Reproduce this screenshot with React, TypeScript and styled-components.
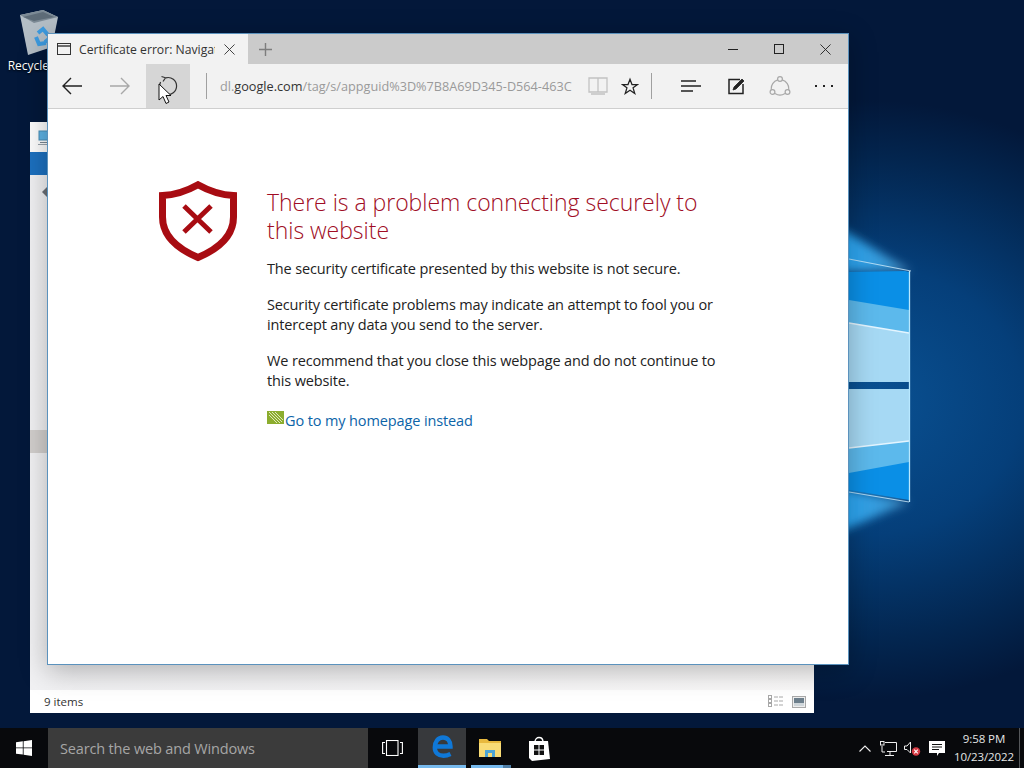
import styled, { createGlobalStyle } from "styled-components";

const Reset = createGlobalStyle`
  html, body { margin: 0; padding: 0; overflow: hidden; background: #000; }
  * { box-sizing: border-box; }
`;

const Screen = styled.div`
  width: 1024px;
  height: 768px;
  display: flex;
  flex-direction: column;
  font-family: "Open Sans", "Noto Sans", sans-serif;
  overflow: hidden;
`;
const Desktop = styled.div`
  position: relative;
  flex: 1;
  overflow: hidden;
  background: #03183a;
`;
const Wallpaper = styled.svg`
  position: absolute;
  inset: 0;
`;
const DesktopIcon = styled.div`
  position: absolute;
  left: 1px;
  top: 9px;
  width: 76px;
  display: flex;
  flex-direction: column;
  align-items: center;
  gap: 2px;
  color: #fff;
  font-size: 12px;
  line-height: 16px;
  text-shadow: 0 1px 2px #000;
`;

/* explorer window behind the browser */
const Explorer = styled.div`
  position: absolute;
  left: 30px;
  top: 122px;
  width: 784px;
  height: 591px;
  background: #fdfdfd;
  display: flex;
  flex-direction: column;
`;
const ExplorerHead = styled.div`
  height: 30px;
  padding: 7px 0 0 8px;
`;
const Ribbon = styled.div`
  height: 23px;
  background: #1c70bf;
`;
const ExplorerBody = styled.div`
  flex: 1;
  padding: 11px 0 0 12px;
  display: flex;
  flex-direction: column;
  background: linear-gradient(90deg, #f1f1f3, #fbfafa);
`;
const Chevron = styled.div`
  width: 0;
  height: 0;
  border-top: 6px solid transparent;
  border-bottom: 6px solid transparent;
  border-right: 6px solid #6b6f75;
`;
const SelectedRow = styled.div`
  height: 23px;
  margin: 232px 0 0 -12px;
  background: #d2cfcd;
`;
const StatusBar = styled.div`
  height: 23px;
  padding: 0 8px 0 14px;
  display: flex;
  align-items: center;
  justify-content: space-between;
  font-size: 11.5px;
  color: #333;
  background: #fff;
`;
const ViewIcons = styled.div`
  display: flex;
  align-items: center;
  gap: 7px;
`;

/* browser */
const Browser = styled.div`
  position: absolute;
  left: 47px;
  top: 33px;
  width: 802px;
  height: 632px;
  border: 1px solid #5b92bd;
  background: #fff;
  display: flex;
  flex-direction: column;
  box-shadow: 0 6px 26px rgba(0, 0, 0, 0.28);
`;
const TabStrip = styled.div`
  height: 30px;
  display: flex;
  align-items: stretch;
  background: #cbcbcb;
`;
const Tab = styled.div`
  width: 200px;
  display: flex;
  align-items: center;
  padding: 0 10px 0 9px;
  background: #f2f2f2;
  color: #333;
  font-size: 12.2px;
`;
const TabTitle = styled.span`
  width: 136px;
  margin: 1px 9px 0 8px;
  overflow: hidden;
  white-space: nowrap;
`;
const NewTab = styled.div`
  width: 34px;
  display: flex;
  align-items: center;
  justify-content: center;
`;
const WindowControls = styled.div`
  margin-left: auto;
  display: flex;
`;
const WindowButton = styled.div`
  width: 46px;
  display: flex;
  align-items: center;
  justify-content: center;
`;
const Toolbar = styled.div`
  height: 45px;
  flex: none;
  display: flex;
  align-items: center;
  background: #f2f2f2;
  border-bottom: 1px solid #cfcfcf;
`;
const ToolButton = styled.div<{ $w?: number; $active?: boolean; $gap?: number }>`
  flex: none;
  width: ${(p) => p.$w ?? 48}px;
  height: 44px;
  margin-left: ${(p) => p.$gap ?? 0}px;
  display: flex;
  align-items: center;
  justify-content: center;
  background: ${(p) => (p.$active ? "#d6d6d6" : "transparent")};
`;
const Separator = styled.div<{ $left: number; $right: number }>`
  flex: none;
  width: 1px;
  height: 26px;
  margin: 0 ${(p) => p.$right}px 0 ${(p) => p.$left}px;
  background: #a0a0a0;
`;
const Address = styled.div`
  flex: none;
  width: 352px;
  white-space: nowrap;
  font-size: 12.7px;
  color: #9a9a9a;
`;
const Domain = styled.span`
  color: #333;
`;
const Page = styled.div`
  flex: 1;
  display: flex;
  align-items: flex-start;
  padding: 72px 0 0 110px;
`;
const ShieldColumn = styled.div`
  width: 109px;
  flex: none;
`;
const Message = styled.div`
  width: 462px;
  padding-top: 7px;
  font-size: 14.5px;
  letter-spacing: -0.14px;
  line-height: 20px;
  color: #222;
`;
const Heading = styled.h1`
  margin: 0 0 15px;
  font-size: 23px;
  font-weight: 300;
  letter-spacing: -0.03px;
  line-height: 28px;
  color: #a00c24;
`;
const Paragraph = styled.p`
  margin: 0 0 16px;
`;
const HomeLink = styled.a`
  display: flex;
  align-items: flex-start;
  margin-top: 20px;
  color: #0c64a8;
  letter-spacing: -0.12px;
`;
const LinkImage = styled.svg`
  flex: none;
  margin-right: 1px;
`;
const Pointer = styled.svg`
  position: absolute;
  left: 158px;
  top: 83px;
`;

/* taskbar */
const Taskbar = styled.div`
  height: 40px;
  display: flex;
  align-items: stretch;
  background: #08090c;
`;
const StartButton = styled.div`
  width: 48px;
  display: flex;
  align-items: center;
  justify-content: center;
`;
const SearchBox = styled.div`
  width: 320px;
  padding-left: 12px;
  display: flex;
  align-items: center;
  background: #3b3b3b;
  color: #a6a6a6;
  font-size: 14.5px;
  letter-spacing: -0.16px;
`;
const TaskButton = styled.div<{ $w?: number; $focused?: boolean; $gap?: number }>`
  position: relative;
  width: ${(p) => p.$w ?? 48}px;
  margin-left: ${(p) => p.$gap ?? 0}px;
  display: flex;
  align-items: center;
  justify-content: center;
  background: ${(p) => (p.$focused ? "#37393c" : "transparent")};
  border-bottom: ${(p) => (p.$focused ? "3px solid #76b9ed" : "none")};
`;
const RunningMark = styled.div`
  position: absolute;
  left: 5px;
  right: 3px;
  bottom: 0;
  height: 3px;
  background: linear-gradient(90deg, #76b9ed 80%, #4f7ea6 80%);
`;
const Tray = styled.div`
  margin-left: auto;
  display: flex;
  align-items: center;
`;
const TrayIcon = styled.div<{ $w: number }>`
  width: ${(p) => p.$w}px;
  display: flex;
  align-items: center;
  justify-content: center;
`;
const Clock = styled.div`
  width: 70px;
  text-align: center;
  color: #e6e6e6;
  font-size: 11.5px;
  letter-spacing: -0.1px;
  line-height: 18px;
`;
const ShowDesktop = styled.div`
  width: 5px;
  height: 40px;
  border-left: 1px solid #55575a;
`;

function WallpaperArt() {
  return (
    <Wallpaper width="1024" height="728" viewBox="0 0 1024 728">
      <defs>
        <radialGradient id="sky" gradientUnits="userSpaceOnUse" cx="0" cy="0" r="1" gradientTransform="translate(860 400) scale(360 300)">
          <stop offset="0" stopColor="#0a5294" />
          <stop offset="0.45" stopColor="#053f7a" />
          <stop offset="0.8" stopColor="#032650" />
          <stop offset="1" stopColor="#03183a" />
        </radialGradient>
        <linearGradient id="wedge" x1="849" x2="909" y1="0" y2="0" gradientUnits="userSpaceOnUse">
          <stop offset="0" stopColor="#2aa8f6" />
          <stop offset="0.7" stopColor="#4db6f2" stopOpacity="0.7" />
          <stop offset="1" stopColor="#9adcff" stopOpacity="0.5" />
        </linearGradient>
        <filter id="soft" x="-30%" y="-60%" width="160%" height="220%">
          <feGaussianBlur stdDeviation="5" />
        </filter>
      </defs>
      <rect width="1024" height="728" fill="#03183a" />
      <rect width="1024" height="728" fill="url(#sky)" />
      <polygon points="840,228 911,271 840,272" fill="url(#wedge)" filter="url(#soft)" />
      <polygon points="840,488 909,502 840,532" fill="url(#wedge)" filter="url(#soft)" />
      <polygon points="849,272 905,271 909,272 909,382 849,382" fill="#0a8fe6" />
      <polygon points="849,300 909,310 909,382 849,382" fill="#5cb9ec" />
      <polygon points="849,323 909,333 909,382 849,382" fill="#a6d9f4" />
      <polygon points="849,389 909,389 909,500 849,490" fill="#0a8fe6" />
      <polygon points="849,389 909,389 909,462 849,473" fill="#5cb9ec" />
      <polygon points="849,389 909,389 909,441 849,448" fill="#a6d9f4" />
      <path d="M849 323 L909 333 M849 448 L909 441" stroke="#e4f5ff" strokeWidth="1.4" />
      <path d="M849 259 L911 271 M849 492 L909 502" stroke="#d8f2ff" strokeWidth="1.2" strokeOpacity="0.75" />
      <path d="M909.5 271 V502" stroke="#b8e8ff" strokeWidth="1.3" />
    </Wallpaper>
  );
}

function RecycleBin() {
  return (
    <svg width="40" height="47" viewBox="0 0 40 47">
      <polygon points="1,6 24,1 39,8 33,38 9,46" fill="#b4bec6" />
      <polygon points="1,6 24,1 39,8 15,14" fill="#7c8a95" />
      <polygon points="4,8 24,3 35,8 15,12" fill="#5e6c78" />
      <path d="M19 24 L24 20 L29 26 M17 28 L20 35 L27 34 M31 29 L26 33" stroke="#3d9be0" strokeWidth="4" fill="none" />
    </svg>
  );
}

function Monitor() {
  return (
    <svg width="12" height="16" viewBox="0 0 12 16">
      <rect x="1" y="1" width="13" height="9" fill="#5fb4e6" stroke="#4a8fb8" />
      <rect x="2" y="12" width="10" height="1" fill="#7a8894" />
      <rect x="0" y="14" width="12" height="1" fill="#9aa4ac" />
    </svg>
  );
}

function DetailsView() {
  return (
    <svg width="17" height="13" viewBox="0 0 17 13" fill="none" stroke="#a8a8a8">
      <rect x="0.5" y="0.5" width="3" height="3" />
      <rect x="0.5" y="4.5" width="3" height="3" />
      <rect x="0.5" y="8.5" width="3" height="3" />
      <path d="M6 2 H16 M6 6 H16 M6 10 H16" strokeDasharray="4 1" />
    </svg>
  );
}

function PreviewView() {
  return (
    <svg width="14" height="12" viewBox="0 0 14 12">
      <rect x="0.5" y="0.5" width="13" height="11" fill="#eee" stroke="#a8a8a8" />
      <rect x="2" y="2" width="10" height="8" fill="#6d7f8c" />
      <rect x="2" y="7" width="10" height="3" fill="#cfd6da" />
    </svg>
  );
}

function TabPage() {
  return (
    <svg width="14" height="12" viewBox="0 0 14 12" fill="none" stroke="#333">
      <rect x="0.5" y="0.5" width="13" height="11" />
      <path d="M0.5 3 H13.5" strokeWidth="1.4" />
    </svg>
  );
}

function Cross({ size, color = "#333" }: { size: number; color?: string }) {
  return (
    <svg width={size} height={size} viewBox="0 0 12 12" stroke={color} fill="none">
      <path d="M0.5 0.5 L11.5 11.5 M11.5 0.5 L0.5 11.5" />
    </svg>
  );
}

function Plus() {
  return (
    <svg width="13" height="13" viewBox="0 0 13 13" stroke="#7d7d7d" strokeWidth="1.4">
      <path d="M6.5 0 V13 M0 6.5 H13" />
    </svg>
  );
}

function Arrow({ color, flip }: { color: string; flip?: boolean }) {
  return (
    <svg width="20" height="18" viewBox="0 0 20 18" fill="none" stroke={color} strokeWidth="1.4" style={flip ? { transform: "scaleX(-1)" } : undefined}>
      <path d="M20 9 H1 M9 1 L1 9 L9 17" />
    </svg>
  );
}

function Refresh() {
  return (
    <svg width="22" height="22" viewBox="0 0 22 22" fill="none" stroke="#333" strokeWidth="1.2">
      <path d="M9 2.8 A8.5 8.5 0 1 1 3.6 7" />
      <path d="M4.5 1.5 L8.5 2.8 L6 6.5" />
    </svg>
  );
}

function ReadingView() {
  return (
    <svg width="20" height="18" viewBox="0 0 20 18" fill="none" stroke="#c2c2c2" strokeWidth="1.3">
      <path d="M1 1 H19 V15 H1 Z M10 1 V15 M3 17 H17" />
    </svg>
  );
}

function Star() {
  return (
    <svg width="20" height="19" viewBox="0 0 20 19" fill="none" stroke="#222" strokeWidth="1.4">
      <path d="M10 1.5 L12.2 7.3 H18.5 L13.4 11 L15.3 17.3 L10 13.6 L4.7 17.3 L6.6 11 L1.5 7.3 H7.8 Z" />
    </svg>
  );
}

function Hub() {
  return (
    <svg width="20" height="12" viewBox="0 0 20 12" stroke="#222" strokeWidth="1.3">
      <path d="M0 1 H15 M0 6 H20 M0 11 H12" />
    </svg>
  );
}

function Note() {
  return (
    <svg width="17" height="17" viewBox="0 0 17 17" fill="none" stroke="#222" strokeWidth="1.5">
      <path d="M12 1.5 H1 V15.5 H15 V6" />
      <path d="M5 12 L6 9 L14 1 L16 3 L8 11 Z" fill="#222" strokeWidth="0.8" />
    </svg>
  );
}

function Share() {
  return (
    <svg width="22" height="20" viewBox="0 0 22 20" fill="none" stroke="#a8a8a8" strokeWidth="1.2">
      <circle cx="11" cy="3" r="2.4" />
      <circle cx="3.5" cy="16" r="2.4" />
      <circle cx="18.5" cy="16" r="2.4" />
      <path d="M8.8 3.8 A9 9 0 0 0 2.4 13.8 M13.2 3.8 A9 9 0 0 1 19.6 13.8 M6 17.5 A9 9 0 0 0 16 17.5" />
    </svg>
  );
}

function More() {
  return (
    <svg width="18" height="2" viewBox="0 0 18 2" fill="#222">
      <rect x="0" width="2" height="2" />
      <rect x="8" width="2" height="2" />
      <rect x="16" width="2" height="2" />
    </svg>
  );
}

function Shield() {
  return (
    <svg width="80" height="82" viewBox="0 0 80 82" fill="none" stroke="#a80c12">
      <path d="M4.5 14.5 C18 14 29 10 40 3.8 C51 10 62 14 75.5 14.5 V36 C75.5 55 60 68 40 76.5 C20 68 4.5 55 4.5 36 Z" strokeWidth="7" />
      <path d="M26 25 L53 51 M53 25 L26 51" strokeWidth="5" />
    </svg>
  );
}

function LinkBadge() {
  return (
    <LinkImage width="17" height="13" viewBox="0 0 17 13">
      <rect width="17" height="13" fill="#8cad2e" />
      <path d="M2 1 L13 12 M5 1 L15 11 M8 1 L16 9 M2 4 L10 12" stroke="#dfe8bc" strokeWidth="1" />
    </LinkImage>
  );
}

function WindowsLogo() {
  return (
    <svg width="16" height="16" viewBox="0 0 16 16" fill="#fff">
      <polygon points="0,2.3 6.8,1.3 6.8,7.5 0,7.5" />
      <polygon points="7.6,1.2 16,0 16,7.5 7.6,7.5" />
      <polygon points="0,8.3 6.8,8.3 6.8,14.6 0,13.7" />
      <polygon points="7.6,8.3 16,8.3 16,16 7.6,14.8" />
    </svg>
  );
}

function TaskView() {
  return (
    <svg width="21" height="16" viewBox="0 0 21 16" fill="none" stroke="#fff" strokeWidth="1.1">
      <rect x="4.5" y="0.5" width="11.5" height="15" />
      <path d="M3 2.5 H0.6 V13.5 H3 M18 2.5 H20.4 V13.5 H18" />
    </svg>
  );
}

function EdgeLogo() {
  return (
    <svg width="21" height="23" viewBox="0 0 21 23" fill="none" stroke="#0f78d8">
      <path d="M5 11.5 H18.5 C18.5 6 15.5 2.5 11 2.5 C6 2.5 2.8 7 2.8 12.5 C2.8 17.8 6.5 20.8 11.5 20.8 C14 20.8 16.5 20 18.5 19" strokeWidth="4.4" />
    </svg>
  );
}

function FolderLogo() {
  return (
    <svg width="22" height="20" viewBox="0 0 22 20">
      <polygon points="0,1 8,1 10,3 22,3 22,19 0,19" fill="#e8b93e" />
      <rect y="5" width="22" height="14" fill="#f9dc76" />
      <rect x="6" y="12" width="10" height="7" fill="#4ea6d6" />
      <rect x="9" y="15" width="4" height="4" fill="#f9dc76" />
    </svg>
  );
}

function StoreLogo() {
  return (
    <svg width="22" height="26" viewBox="0 0 22 26">
      <path d="M7 7 C7 1 15 1 15 7" fill="none" stroke="#fff" strokeWidth="1.4" />
      <polygon points="1,6 20,6 22,24 4,26 1,23" fill="#fff" />
      <rect x="6" y="10" width="4.5" height="4.5" fill="#111" />
      <rect x="11.5" y="10" width="4.5" height="4.5" fill="#111" />
      <rect x="6" y="15.5" width="4.5" height="4.5" fill="#111" />
      <rect x="11.5" y="15.5" width="4.5" height="4.5" fill="#111" />
    </svg>
  );
}

function Caret() {
  return (
    <svg width="12" height="7" viewBox="0 0 12 7" fill="none" stroke="#eee" strokeWidth="1.1">
      <path d="M0.5 6.5 L6 1 L11.5 6.5" />
    </svg>
  );
}

function Network() {
  return (
    <svg width="17" height="15" viewBox="0 0 17 15" fill="none" stroke="#eee">
      <path d="M5 1.5 H16.5 V10.5 H7 M10 10.5 V14 M5 14.5 H14" />
      <rect x="0.5" y="0.5" width="3.5" height="3.5" />
      <path d="M2 5 V11 H5" />
    </svg>
  );
}

function Speaker() {
  return (
    <svg width="17" height="15" viewBox="0 0 17 15">
      <path d="M0.5 5 H3 L6.5 1 V12 L3 8.5 H0.5 Z" fill="none" stroke="#eee" />
      <circle cx="12" cy="10.5" r="4.2" fill="#d63a44" />
      <path d="M10.2 8.7 L13.8 12.3 M13.8 8.7 L10.2 12.3" stroke="#fff" strokeWidth="1.1" />
    </svg>
  );
}

function Notifications() {
  return (
    <svg width="16" height="15" viewBox="0 0 16 15">
      <path d="M0 0 H16 V12 H10 L8 15 L8 12 H0 Z" fill="#fff" />
      <path d="M3 3.5 H13 M3 6 H13 M3 8.5 H10" stroke="#111" />
    </svg>
  );
}

export default function App() {
  return (
    <Screen>
      <Reset />
      <Desktop>
        <WallpaperArt />
        <DesktopIcon>
          <RecycleBin />
          <span>Recycle Bin</span>
        </DesktopIcon>

        <Explorer>
          <ExplorerHead>
            <Monitor />
          </ExplorerHead>
          <Ribbon />
          <ExplorerBody>
            <Chevron />
            <SelectedRow />
          </ExplorerBody>
          <StatusBar>
            <span>9 items</span>
            <ViewIcons>
              <DetailsView />
              <PreviewView />
            </ViewIcons>
          </StatusBar>
        </Explorer>

        <Browser>
          <TabStrip>
            <Tab>
              <TabPage />
              <TabTitle>Certificate error: Navigation</TabTitle>
              <Cross size={11} />
            </Tab>
            <NewTab>
              <Plus />
            </NewTab>
            <WindowControls>
              <WindowButton>
                <svg width="10" height="1" viewBox="0 0 10 1">
                  <rect width="10" height="1" fill="#222" />
                </svg>
              </WindowButton>
              <WindowButton>
                <svg width="10" height="10" viewBox="0 0 10 10" fill="none" stroke="#222">
                  <rect x="0.5" y="0.5" width="9" height="9" />
                </svg>
              </WindowButton>
              <WindowButton>
                <Cross size={11} color="#222" />
              </WindowButton>
            </WindowControls>
          </TabStrip>
          <Toolbar>
            <ToolButton>
              <Arrow color="#222" />
            </ToolButton>
            <ToolButton>
              <Arrow color="#a8a8a8" flip />
            </ToolButton>
            <ToolButton $w={44} $gap={2} $active>
              <Refresh />
            </ToolButton>
            <Separator $left={16} $right={13} />
            <Address>
              dl.<Domain>google.com</Domain>/tag/s/appguid%3D%7B8A69D345-D564-463C
            </Address>
            <ToolButton $w={46} $gap={3}>
              <ReadingView />
            </ToolButton>
            <ToolButton $w={18}>
              <Star />
            </ToolButton>
            <Separator $left={12} $right={16} />
            <ToolButton $w={46}>
              <Hub />
            </ToolButton>
            <ToolButton $w={44}>
              <Note />
            </ToolButton>
            <ToolButton $w={44}>
              <Share />
            </ToolButton>
            <ToolButton $w={44}>
              <More />
            </ToolButton>
          </Toolbar>
          <Page>
            <ShieldColumn>
              <Shield />
            </ShieldColumn>
            <Message>
              <Heading>There is a problem connecting securely to this website</Heading>
              <Paragraph>The security certificate presented by this website is not secure.</Paragraph>
              <Paragraph>Security certificate problems may indicate an attempt to fool you or intercept any data you send to the server.</Paragraph>
              <Paragraph>We recommend that you close this webpage and do not continue to this website.</Paragraph>
              <HomeLink>
                <LinkBadge />
                Go to my homepage instead
              </HomeLink>
            </Message>
          </Page>
        </Browser>

        <Pointer width="18" height="22" viewBox="0 0 18 22">
          <path d="M1 1 V17 L5 13.5 L8 20.5 L11 19 L8 12.5 L13 12.5 Z" fill="#fff" stroke="#111" />
        </Pointer>
      </Desktop>

      <Taskbar>
        <StartButton>
          <WindowsLogo />
        </StartButton>
        <SearchBox>Search the web and Windows</SearchBox>
        <TaskButton>
          <TaskView />
        </TaskButton>
        <TaskButton $gap={2} $focused>
          <EdgeLogo />
        </TaskButton>
        <TaskButton>
          <FolderLogo />
          <RunningMark />
        </TaskButton>
        <TaskButton $w={50}>
          <StoreLogo />
        </TaskButton>
        <Tray>
          <TrayIcon $w={22}>
            <Caret />
          </TrayIcon>
          <TrayIcon $w={24}>
            <Network />
          </TrayIcon>
          <TrayIcon $w={25}>
            <Speaker />
          </TrayIcon>
          <TrayIcon $w={24}>
            <Notifications />
          </TrayIcon>
          <Clock>
            9:58 PM
            <br />
            10/23/2022
          </Clock>
          <ShowDesktop />
        </Tray>
      </Taskbar>
    </Screen>
  );
}
